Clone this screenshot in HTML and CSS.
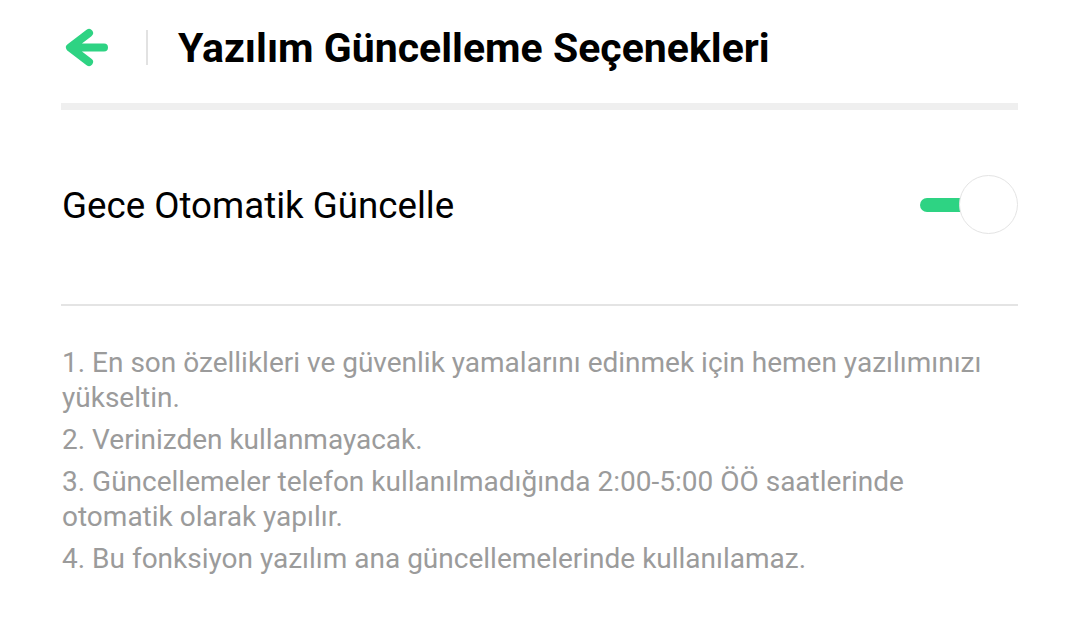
FILE: index.html
```html
<!DOCTYPE html>
<html lang="tr">
<head>
  <meta charset="UTF-8" />
  <meta name="viewport" content="width=device-width, initial-scale=1.0" />
  <title>Yazılım Güncelleme Seçenekleri</title>
  <link rel="stylesheet" href="styles.css">
</head>
<body>
  <div class="page">
    <header class="top-bar">
      <button class="back-btn" aria-label="Geri">
        <svg width="48" height="42" viewBox="0 0 48 42">
          <path d="M25 6 L6 20.5 L25 35 M8 20.5 H40" fill="none" stroke="#2ed383" stroke-width="8" stroke-linecap="round" stroke-linejoin="round"/>
        </svg>
      </button>
      <span class="sep"></span>
      <h1>Yazılım Güncelleme Seçenekleri</h1>
    </header>

    <div class="band"></div>

    <div class="setting-row">
      <span class="setting-label">Gece Otomatik Güncelle</span>
      <div class="switch on">
        <span class="track"></span>
        <span class="knob"></span>
      </div>
    </div>

    <div class="rule"></div>

    <ol class="notes">
      <li>1. En son özellikleri ve güvenlik yamalarını edinmek için hemen yazılımınızı yükseltin.</li>
      <li>2. Verinizden kullanmayacak.</li>
      <li>3. Güncellemeler telefon kullanılmadığında 2:00-5:00 ÖÖ saatlerinde otomatik olarak yapılır.</li>
      <li>4. Bu fonksiyon yazılım ana güncellemelerinde kullanılamaz.</li>
    </ol>
  </div>
</body>
</html>
```

FILE: styles.css
```css
body {
  margin: 0;
  padding: 0;
  background-color: #fff;
  color: #000;
  font-family: Roboto, "Noto Sans", Arial, sans-serif;
}
.page {
  padding: 0 62px 0 61px;
}
.top-bar {
  display: flex;
  align-items: center;
  height: 103px;
  padding-bottom: 8px;
  box-sizing: border-box;
}
.back-btn {
  width: 48px;
  height: 42px;
  padding: 0;
  margin-left: 3px;
  border: none;
  background: none;
  cursor: pointer;
}
.back-btn svg {
  display: block;
}
.sep {
  width: 2px;
  height: 35px;
  background-color: #e2e2e2;
  margin-left: 34px;
}
h1 {
  margin: 0 0 0 30px;
  font-size: 41px;
  font-weight: 700;
}
.band {
  height: 7px;
  background-color: #efefef;
}
.setting-row {
  display: flex;
  align-items: center;
  justify-content: space-between;
  height: 194px;
}
.setting-label {
  font-size: 36.7px;
  padding-left: 1px;
  margin-bottom: 3px;
}
.switch {
  position: relative;
  width: 98px;
  height: 60px;
  margin-bottom: 4px;
}
.track {
  position: absolute;
  left: 0;
  top: 23px;
  width: 48px;
  height: 14px;
  border-radius: 7px;
  background-color: #2ed383;
}
.knob {
  position: absolute;
  right: 0;
  top: 0;
  width: 57px;
  height: 57px;
  border-radius: 50%;
  background-color: #fff;
  border: 1.5px solid #e4e4e4;
}
.rule {
  height: 1.5px;
  background-color: #e4e4e4;
}
.notes {
  list-style: none;
  margin: 0;
  padding: 39px 0 0 1px;
  font-size: 28px;
  line-height: 35px;
  color: #9b9b9b;
}
.notes li {
  margin-bottom: 7px;
}
```
